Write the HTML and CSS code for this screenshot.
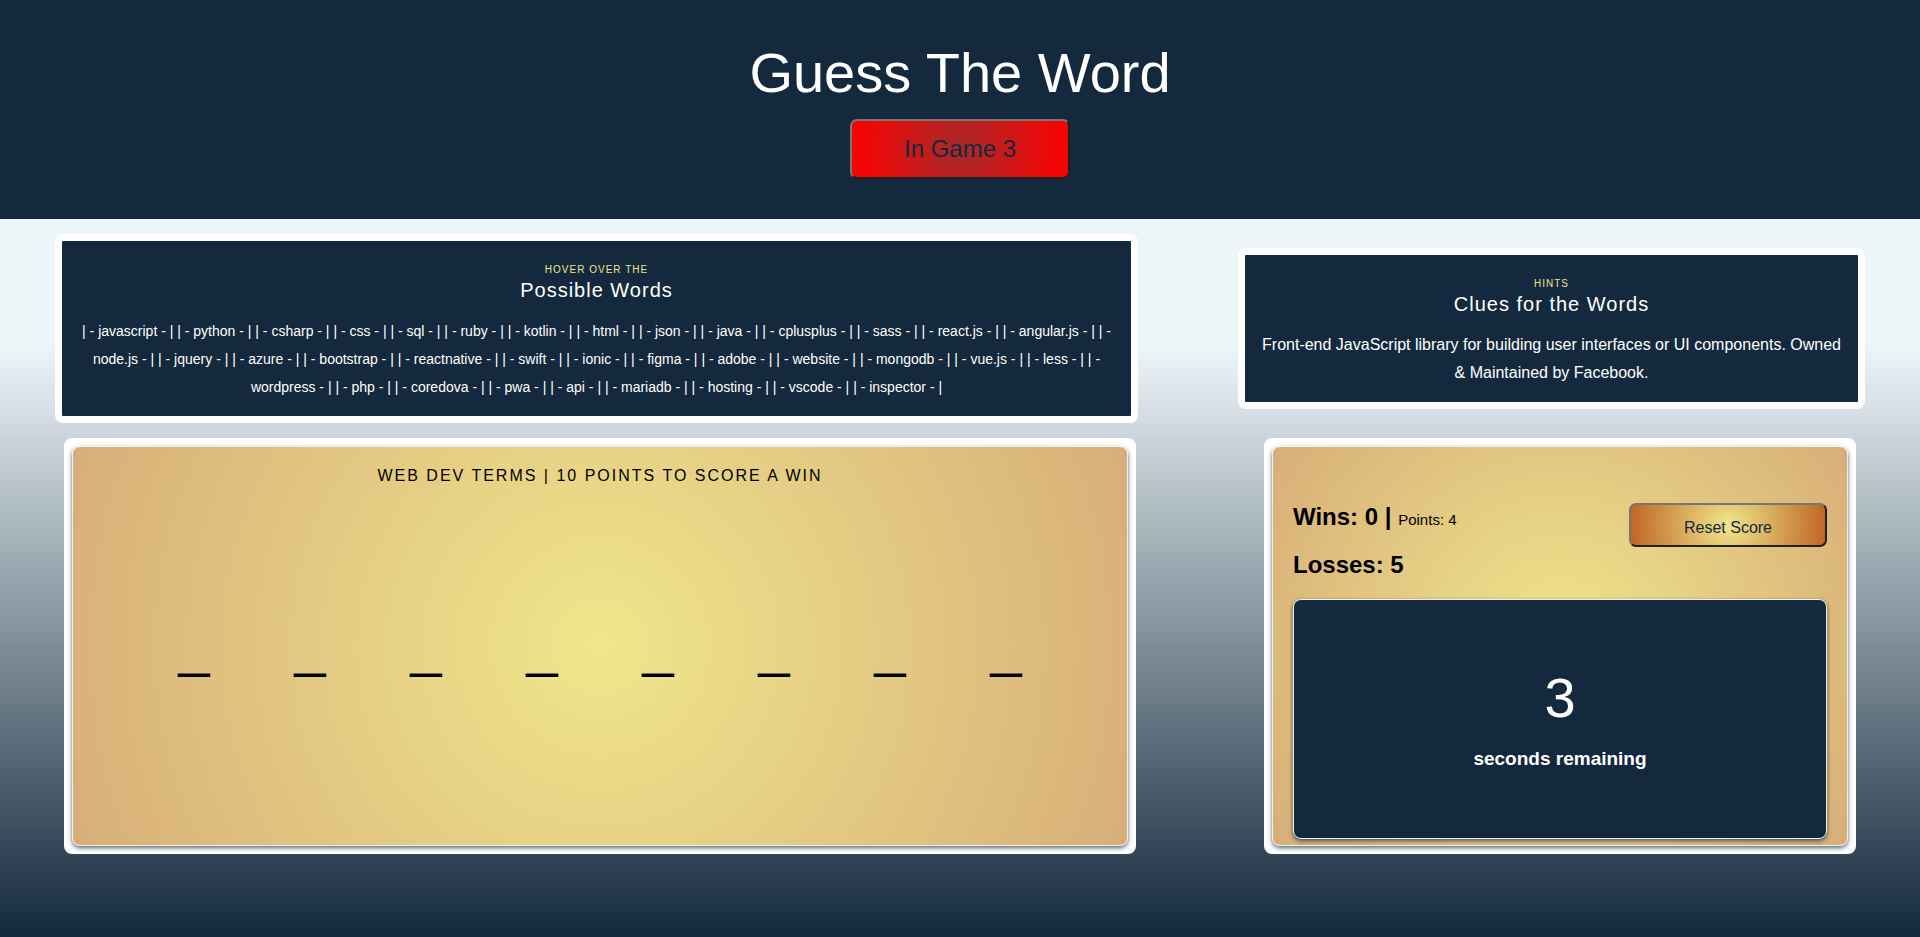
FILE: index.html
```html
<!DOCTYPE html>
<html lang="en">
<head>
<meta charset="utf-8">
<title>Guess The Word</title>
<link rel="stylesheet" href="styles.css">
</head>
<body>
<header class="header">
  <h1 class="title">Guess The Word</h1>
  <button class="start-button" type="button">In Game 3</button>
</header>
<main class="board">
  <section class="info words">
    <p class="eyebrow">Hover over the</p>
    <h2 class="info-title">Possible Words</h2>
    <p class="word-list">| - javascript - | | - python - | | - csharp - | | - css - | | - sql - | | - ruby - | | - kotlin - | | - html - | | - json - | | - java - | | - cplusplus - | | - sass - | | - react.js - | | - angular.js - | | - node.js - | | - jquery - | | - azure - | | - bootstrap - | | - reactnative - | | - swift - | | - ionic - | | - figma - | | - adobe - | | - website - | | - mongodb - | | - vue.js - | | - less - | | - wordpress - | | - php - | | - coredova - | | - pwa - | | - api - | | - mariadb - | | - hosting - | | - vscode - | | - inspector - |</p>
  </section>
  <section class="info hints">
    <p class="eyebrow">Hints</p>
    <h2 class="info-title">Clues for the Words</h2>
    <p class="clue">Front-end JavaScript library for building user interfaces or UI components. Owned &amp; Maintained by Facebook.</p>
  </section>
  <section class="frame game">
    <div class="card">
      <h2 class="category">Web Dev Terms | 10 Points to score a win</h2>
      <div class="blanks">
        <span>_</span><span>_</span><span>_</span><span>_</span><span>_</span><span>_</span><span>_</span><span>_</span>
      </div>
    </div>
  </section>
  <section class="frame results">
    <div class="card score-card">
      <div class="score">
        <div class="tallies">
          <p class="tally">Wins: 0 | <span class="points">Points: 4</span></p>
          <p class="tally">Losses: 5</p>
        </div>
        <button class="reset-button" type="button">Reset Score</button>
      </div>
      <div class="timer">
        <p class="count">3</p>
        <p class="caption">seconds remaining</p>
      </div>
    </div>
  </section>
</main>
</body>
</html>
```
FILE: styles.css
```css
* { box-sizing: border-box; }

body {
  margin: 0;
  min-height: 100vh;
  font-family: "Liberation Sans", Arial, sans-serif;
  font-size: 16px;
  line-height: 28px;
  color: #000;
  background: linear-gradient(#ecf5f8 37%, #d3dae2 45%, #c9d4d9 47%, #14293d 100%);
}

h1, h2, p { margin: 0; font-weight: 400; }

button { font-family: inherit; color: #14293d; cursor: pointer; }

.header {
  display: flex;
  flex-direction: column;
  align-items: center;
  gap: 14px;
  padding: 41px 0 40px;
  background: #14293d;
}

.title {
  font-size: 56px;
  line-height: 64px;
  color: #fff;
}

.start-button {
  width: 220px;
  height: 60px;
  font-size: 24px;
  border: 2px outset #767676;
  border-radius: 7px;
  background: radial-gradient(circle, brown, red);
}

.board {
  display: grid;
  grid-template-columns: 1083fr 627fr;
  column-gap: 100px;
  row-gap: 15px;
  align-items: center;
  padding: 15px 55px;
}

.info {
  padding: 21px 14px 15px;
  text-align: center;
  color: #fff;
  background: #14293d;
  border: 7px solid #fff;
  border-radius: 8px;
}

.eyebrow {
  font-size: 10px;
  line-height: 16px;
  letter-spacing: 1px;
  text-transform: uppercase;
  color: khaki;
}

.info-title {
  margin-bottom: 15px;
  font-size: 20px;
  line-height: 24px;
  letter-spacing: 1px;
}

.word-list { font-size: 14px; }

.frame {
  padding: 8px;
  background: #fff;
  border-radius: 8px;
}

.game { margin: 0 2px 0 9px; }

.results { margin: 0 9px 0 26px; }

.card {
  height: 400px;
  padding: 15px 20px;
  border: 1px solid #eee;
  border-radius: 8px;
  background: radial-gradient(circle, khaki, #d7ae78);
  box-shadow: 0 2px 4px rgba(20, 41, 61, 0.7);
}

.category {
  font-size: 16px;
  letter-spacing: 2px;
  text-align: center;
  text-transform: uppercase;
}

.blanks {
  display: grid;
  grid-template-columns: repeat(8, 1fr);
  padding: 125px 43px;
  font-size: 56px;
  line-height: 64px;
  text-align: center;
}

.score-card {
  display: flex;
  flex-direction: column;
  padding: 46px 20px 6px;
}

.score {
  display: flex;
  justify-content: space-between;
  align-items: flex-start;
  padding-bottom: 10px;
}

.tally {
  font-size: 24px;
  font-weight: 700;
  line-height: 48px;
}

.points { font-size: 15px; font-weight: 400; line-height: 1; }

.reset-button {
  width: 198px;
  height: 44px;
  margin-top: 10px;
  padding: 6px 0 0;
  font-size: 16px;
  border: 2px outset #767676;
  border-radius: 7px;
  background: radial-gradient(circle, khaki, #bf6526);
}

.timer {
  display: flex;
  flex: 1;
  flex-direction: column;
  align-items: center;
  justify-content: center;
  padding-bottom: 14px;
  color: #fff;
  background: #14293d;
  border: 1px solid #eee;
  border-radius: 8px;
  box-shadow: 0 2px 4px rgba(20, 41, 61, 0.7);
}

.count { font-size: 56px; line-height: 94px; }

.caption { font-size: 19px; font-weight: 700; }
```
